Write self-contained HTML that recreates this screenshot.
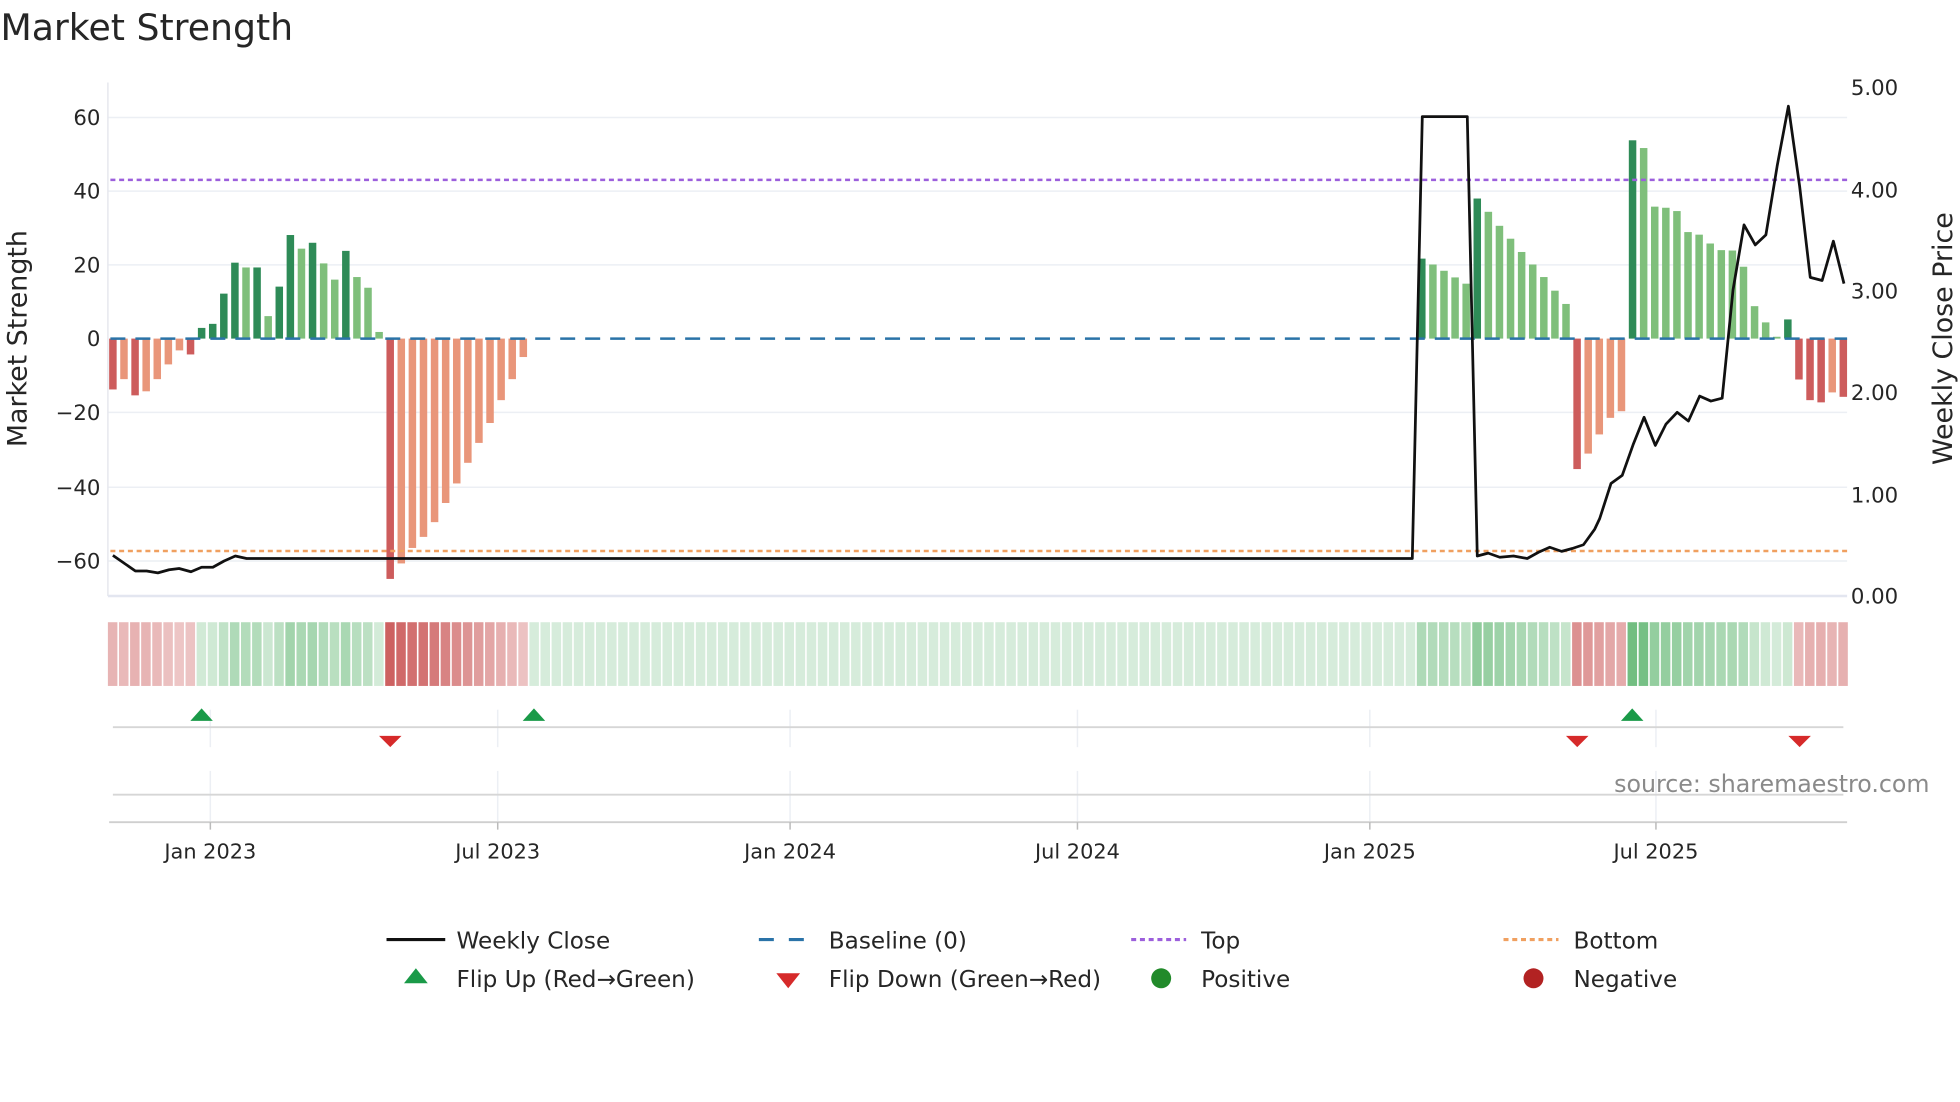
<!DOCTYPE html>
<html><head><meta charset="utf-8"><style>
html,body{margin:0;padding:0;background:#fff;width:1960px;height:1102px;overflow:hidden}
svg text{font-family:"DejaVu Sans","Liberation Sans",sans-serif;fill:#262626}
</style></head><body>
<svg id="s" width="1960" height="1102" viewBox="0 0 1568 882" xmlns="http://www.w3.org/2000/svg">
<text x="0" y="32" font-size="29" fill="#333">Market Strength</text>
<g stroke="#eceff4" stroke-width="1.2">
<line x1="86" y1="94" x2="1478" y2="94"/><line x1="86" y1="153" x2="1478" y2="153"/>
<line x1="86" y1="212" x2="1478" y2="212"/><line x1="86" y1="330" x2="1478" y2="330"/>
<line x1="86" y1="390" x2="1478" y2="390"/><line x1="86" y1="449" x2="1478" y2="449"/>
</g>
<line x1="86" y1="66" x2="86" y2="477" stroke="#e6e8ee" stroke-width="1.2"/>
<line x1="86" y1="477" x2="1478" y2="477" stroke="#e3e6f0" stroke-width="2"/>
<g font-size="17" text-anchor="end">
<text x="80" y="100">60</text><text x="80" y="159">40</text><text x="80" y="218">20</text>
<text x="80" y="277">0</text><text x="80" y="336">−20</text><text x="80" y="396">−40</text><text x="80" y="455">−60</text>
</g>
<g font-size="17">
<text x="1481" y="76">5.00</text><text x="1481" y="158">4.00</text><text x="1481" y="239">3.00</text>
<text x="1481" y="320">2.00</text><text x="1481" y="402">1.00</text><text x="1481" y="483">0.00</text>
</g>
<text transform="translate(21,271) rotate(-90)" font-size="21.5" text-anchor="middle">Market Strength</text>
<text transform="translate(1562,271) rotate(-90)" font-size="21.5" text-anchor="middle">Weekly Close Price</text>
<g id="bars"></g>
<line x1="88" y1="271" x2="1478" y2="271" stroke="#2a73a8" stroke-width="2" stroke-dasharray="12,8"/>
<line x1="88" y1="144" x2="1478" y2="144" stroke="#9c5fdc" stroke-width="2" stroke-dasharray="4,3"/>
<line x1="88" y1="441" x2="1478" y2="441" stroke="#f0a060" stroke-width="2" stroke-dasharray="4,3"/>
<polyline fill="none" stroke="#111" stroke-width="2.2" stroke-linejoin="round" points="90,444.5 108,457 117,457 126,458.5 135,456 143,455 152.5,457.6 161,454 170,454 179,449 188,445 197,447 1130,447 1138,93.3 1174,93.3 1182,445 1190.7,442.7 1200,446 1211,445 1222,447 1231,442 1240,438 1249.5,441.3 1258,439 1267,436 1276,423.5 1280,415 1289,387 1298,380.5 1306.7,356 1315.5,334 1324.5,356.5 1333,339.5 1342,330 1351,337 1360,317 1369,321 1378,318.7 1386.7,232 1395.5,180 1404.5,196 1413,188 1422,133 1431,85 1440,149 1448.5,222 1458,224.5 1467,193 1475.5,227"/>
<g id="heat"></g>
<g stroke="#eceff4" stroke-width="1.2">
<line x1="168" y1="568" x2="168" y2="598"/><line x1="398" y1="568" x2="398" y2="598"/><line x1="632" y1="568" x2="632" y2="598"/>
<line x1="862" y1="568" x2="862" y2="598"/><line x1="1096" y1="568" x2="1096" y2="598"/><line x1="1325" y1="568" x2="1325" y2="598"/>
<line x1="168" y1="617" x2="168" y2="657"/><line x1="398" y1="617" x2="398" y2="657"/><line x1="632" y1="617" x2="632" y2="657"/>
<line x1="862" y1="617" x2="862" y2="657"/><line x1="1096" y1="617" x2="1096" y2="657"/><line x1="1325" y1="617" x2="1325" y2="657"/>
</g>
<line x1="90" y1="582" x2="1475" y2="582" stroke="#d6d6d6" stroke-width="1.5"/>
<line x1="90" y1="636" x2="1475" y2="636" stroke="#d6d6d6" stroke-width="1.5"/>
<line x1="87" y1="658" x2="1478" y2="658" stroke="#cfcfcf" stroke-width="1.5"/>
<g fill="#1a9a48">
<polygon points="152,577 170,577 161,567"/><polygon points="418,577 436,577 427,567"/><polygon points="1297,577 1315,577 1306,567"/>
</g>
<g fill="#d62a2a">
<polygon points="303,589 321,589 312,598"/><polygon points="1253,589 1271,589 1262,598"/><polygon points="1431,589 1449,589 1440,598"/>
</g>
<g stroke="#bbb" stroke-width="1.2">
<line x1="168" y1="658" x2="168" y2="664"/><line x1="398" y1="658" x2="398" y2="664"/><line x1="632" y1="658" x2="632" y2="664"/>
<line x1="862" y1="658" x2="862" y2="664"/><line x1="1096" y1="658" x2="1096" y2="664"/><line x1="1325" y1="658" x2="1325" y2="664"/>
</g>
<text x="1544" y="634" font-size="19" text-anchor="end" style="fill:#8a8a8a">source: sharemaestro.com</text>
<g font-size="16.7" text-anchor="middle">
<text x="168" y="687">Jan 2023</text><text x="398" y="687">Jul 2023</text><text x="632" y="687">Jan 2024</text>
<text x="862" y="687">Jul 2024</text><text x="1096" y="687">Jan 2025</text><text x="1325" y="687">Jul 2025</text>
</g>
<g font-size="18.5">
<line x1="309" y1="752" x2="356" y2="752" stroke="#111" stroke-width="2.5"/><text x="365" y="759">Weekly Close</text>
<line x1="607" y1="752" x2="651" y2="752" stroke="#2a73a8" stroke-width="2.5" stroke-dasharray="12,12"/><text x="663" y="759">Baseline (0)</text>
<line x1="905" y1="752" x2="949" y2="752" stroke="#9c5fdc" stroke-width="2.5" stroke-dasharray="4,3"/><text x="961" y="759">Top</text>
<line x1="1203" y1="752" x2="1247" y2="752" stroke="#f0a060" stroke-width="2.5" stroke-dasharray="4,3"/><text x="1259" y="759">Bottom</text>
<polygon points="323,787 342,787 332.5,775" fill="#1a9a48"/><text x="365" y="790">Flip Up (Red→Green)</text>
<polygon points="621,779 640,779 630.5,791" fill="#d62a2a"/><text x="663" y="790">Flip Down (Green→Red)</text>
<circle cx="929" cy="783" r="8" fill="#218a2a"/><text x="961" y="790">Positive</text>
<circle cx="1227" cy="783" r="8" fill="#b22222"/><text x="1259" y="790">Negative</text>
</g>
</svg>
<script>
var A=[[-13.8,1],[-11,0],[-15.4,1],[-14.3,0],[-11,0],[-7,0],[-3.2,0],[-4.3,1],[2.9,1],[4,1],[12.2,1],[20.6,1],[19.3,0],[19.3,1],[6.1,0],[14.1,1],[28.1,1],[24.4,0],[26,1],[20.4,0],[16,0],[23.8,1],[16.7,0],[13.8,0],[1.8,0],[-65.2,1],[-61,0],[-56.8,0],[-53.8,0],[-49.8,0],[-44.6,0],[-39.3,0],[-33.7,0],[-28.3,0],[-22.9,0],[-16.7,0],[-11,0],[-5,0]];
while(A.length<118)A.push([0,0]);
A=A.concat([[21.7,1],[20.1,0],[18.4,0],[16.6,0],[14.9,0],[38,1],[34.4,0],[30.6,0],[27.1,0],[23.5,0],[20.1,0],[16.7,0],[13,0],[9.4,0],[-35.4,1],[-31.2,0],[-26,0],[-21.5,0],[-19.7,0],[53.8,1],[51.7,0],[35.8,0],[35.5,0],[34.6,0],[28.9,0],[28.2,0],[25.8,0],[24,0],[23.9,0],[19.5,0],[8.8,0],[4.4,0],[0.5,0],[5.2,1],[-11.1,1],[-16.7,1],[-17.3,1],[-14.6,0],[-15.8,1]]);
var ns="http://www.w3.org/2000/svg",b=document.getElementById("bars"),h=document.getElementById("heat");
function r(p,x,y,w,hh,f){var e=document.createElementNS(ns,"rect");e.setAttribute("x",x);e.setAttribute("y",y);e.setAttribute("width",w);e.setAttribute("height",hh);e.setAttribute("fill",f);p.appendChild(e);}
for(var i=0;i<A.length;i++){var v=A[i][0],d=A[i][1],cx=90+i*8.878;
 if(v!==0){var hh=Math.abs(v)*2.95,f=v>0?(d?"#2e8b57":"#7fbf7b"):(d?"#cd5c5c":"#e9967a");r(b,cx-3,v>0?271-hh:271,6,hh,f);}
 var a,c;if(v<0){a=0.3+0.6*Math.min(-v/65,1);c="200,80,80";}else{a=0.22+0.55*Math.min(v/55,1);c="70,170,90";}
 r(h,cx-4,498,7.6,51,"rgba("+c+","+a.toFixed(2)+")");}
</script>
</body></html>
